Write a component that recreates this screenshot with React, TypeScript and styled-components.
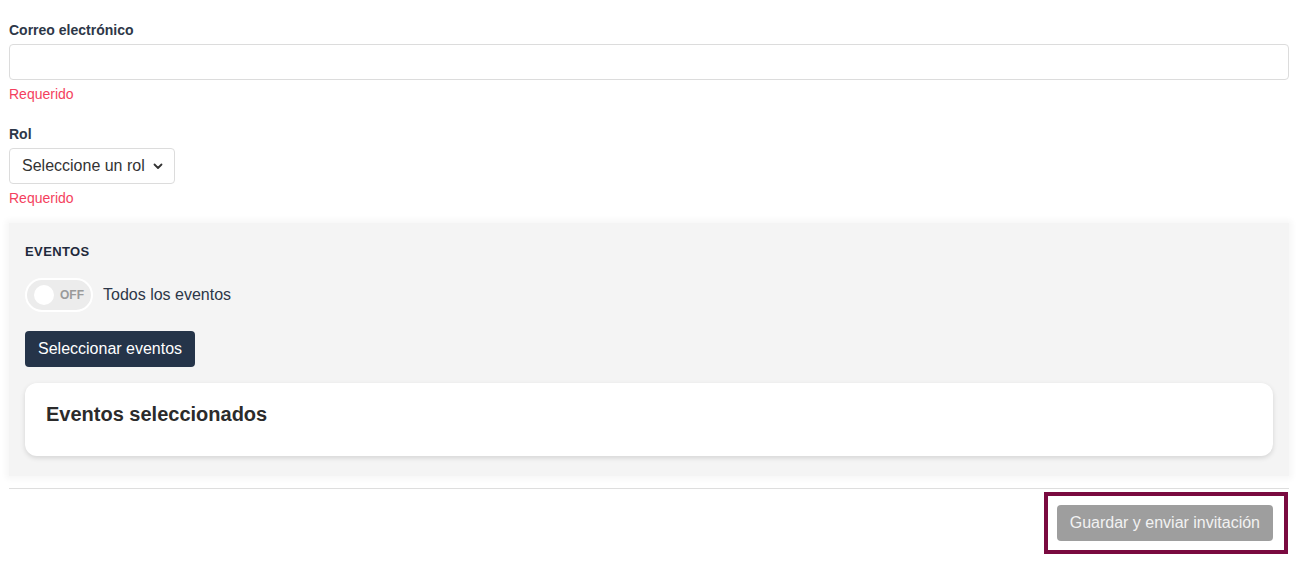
import React from "react";
import styled, { createGlobalStyle } from "styled-components";

const GlobalStyle = createGlobalStyle`
  body {
    margin: 0;
    background: #fff;
    font-family: "Liberation Sans", Arial, sans-serif;
    color: #2d3748;
  }
`;

const Page = styled.div`
  padding: 20px 20px 16px 9px;
  display: flex;
  flex-direction: column;
`;

const Field = styled.div`
  display: flex;
  flex-direction: column;
  align-items: flex-start;
  margin-bottom: 22px;

  & + & {
    margin-bottom: 20px;
  }
`;

const Label = styled.label`
  font-size: 14px;
  font-weight: 700;
  color: #2d3748;
  line-height: 20px;
  margin-bottom: 4px;
`;

const Input = styled.input`
  box-sizing: border-box;
  width: 100%;
  height: 36px;
  border: 1px solid #dcdcdc;
  border-radius: 4px;
  padding: 0 12px;
  font-size: 16px;
  font-family: inherit;
`;

const Error = styled.span`
  font-size: 14px;
  color: #f43f5e;
  line-height: 16px;
  margin-top: 6px;
`;

const SelectBox = styled.div`
  box-sizing: border-box;
  height: 36px;
  border: 1px solid #dcdcdc;
  border-radius: 4px;
  padding: 0 10px 0 12px;
  display: flex;
  align-items: center;
  gap: 7px;
  font-size: 16px;
  color: #333;
`;

const Panel = styled.section`
  background: #f4f4f4;
  box-shadow: 0 0 6px 3px #f6f6f6;
  padding: 20px 16px 20px 16px;
  display: flex;
  flex-direction: column;
  align-items: flex-start;
  margin-top: -3px;
`;

const PanelTitle = styled.h3`
  margin: 0 0 17px;
  font-size: 13px;
  font-weight: 700;
  letter-spacing: 0.4px;
  color: #1f2a3c;
  line-height: 18px;
`;

const ToggleRow = styled.div`
  display: flex;
  align-items: center;
  gap: 10px;
  margin-bottom: 19px;
`;

const Toggle = styled.div`
  box-sizing: border-box;
  width: 68px;
  height: 34px;
  border: 2px solid #fff;
  border-radius: 17px;
  background: #ececec;
  display: flex;
  align-items: center;
  padding: 0 8px 0 7px;
  gap: 6px;
`;

const Knob = styled.span`
  flex: 0 0 20px;
  width: 20px;
  height: 20px;
  border-radius: 50%;
  background: #fff;
`;

const ToggleText = styled.span`
  font-size: 12px;
  font-weight: 700;
  color: #9a9a9a;
`;

const ToggleLabel = styled.span`
  font-size: 16px;
  color: #2d3748;
`;

const DarkButton = styled.button`
  height: 36px;
  padding: 0 13px;
  border: none;
  border-radius: 4px;
  background: #253449;
  color: #fff;
  font-family: inherit;
  font-size: 16px;
  margin-bottom: 16px;
`;

const Card = styled.div`
  box-sizing: border-box;
  width: 100%;
  height: 73px;
  background: #fff;
  border-radius: 12px;
  box-shadow: 0 2px 5px rgba(0, 0, 0, 0.13);
  padding: 20px 21px;
`;

const CardTitle = styled.h2`
  margin: 0;
  font-size: 20px;
  font-weight: 700;
  color: #2b2b2b;
  line-height: 22px;
`;

const Divider = styled.hr`
  border: none;
  border-top: 1px solid #dedede;
  margin: 12px 0 3px;
`;

const Footer = styled.div`
  display: flex;
  justify-content: flex-end;
  padding-right: 1px;
`;

const Highlight = styled.div`
  border: 4px solid #7a0a40;
  padding: 9px 11px 9px 9px;
`;

const GreyButton = styled.button`
  height: 36px;
  padding: 0 13px;
  border: none;
  border-radius: 4px;
  background: #9e9e9e;
  color: #f2f2f2;
  font-family: inherit;
  font-size: 16px;
`;

const Chevron = () => (
  <svg width="12" height="12" viewBox="0 0 12 12" fill="none">
    <path d="M2.5 4.5 6 8l3.5-3.5" stroke="#333" strokeWidth="1.8" strokeLinecap="round" strokeLinejoin="round" />
  </svg>
);

export default function App() {
  return (
    <>
      <GlobalStyle />
      <Page>
        <Field>
          <Label>Correo electrónico</Label>
          <Input type="email" />
          <Error>Requerido</Error>
        </Field>
        <Field>
          <Label>Rol</Label>
          <SelectBox>
            Seleccione un rol
            <Chevron />
          </SelectBox>
          <Error>Requerido</Error>
        </Field>
        <Panel>
          <PanelTitle>EVENTOS</PanelTitle>
          <ToggleRow>
            <Toggle>
              <Knob />
              <ToggleText>OFF</ToggleText>
            </Toggle>
            <ToggleLabel>Todos los eventos</ToggleLabel>
          </ToggleRow>
          <DarkButton type="button">Seleccionar eventos</DarkButton>
          <Card>
            <CardTitle>Eventos seleccionados</CardTitle>
          </Card>
        </Panel>
        <Divider />
        <Footer>
          <Highlight>
            <GreyButton type="button">Guardar y enviar invitación</GreyButton>
          </Highlight>
        </Footer>
      </Page>
    </>
  );
}
